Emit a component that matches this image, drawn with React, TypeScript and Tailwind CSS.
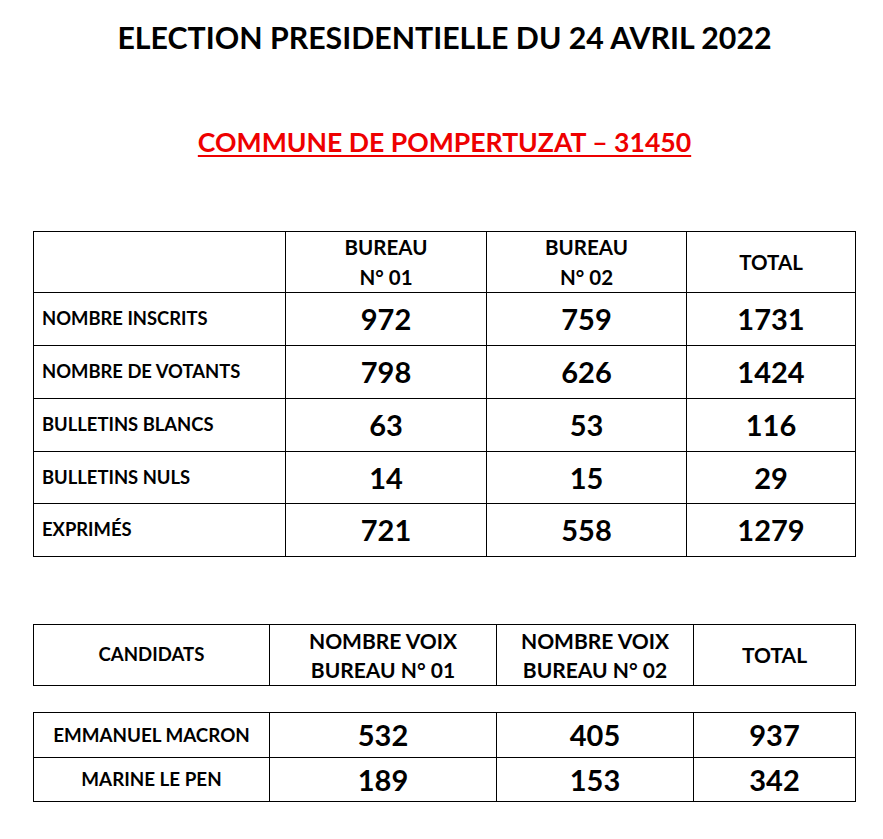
import React from 'react';

const stats = [
  { label: 'NOMBRE INSCRITS', b1: '972', b2: '759', total: '1731' },
  { label: 'NOMBRE DE VOTANTS', b1: '798', b2: '626', total: '1424' },
  { label: 'BULLETINS BLANCS', b1: '63', b2: '53', total: '116' },
  { label: 'BULLETINS NULS', b1: '14', b2: '15', total: '29' },
  { label: 'EXPRIMÉS', b1: '721', b2: '558', total: '1279' },
];

const candidats = [
  { name: 'EMMANUEL MACRON', b1: '532', b2: '405', total: '937' },
  { name: 'MARINE LE PEN', b1: '189', b2: '153', total: '342' },
];

const cell = 'border border-black p-0';

const App: React.FC = () => {
  return (
    <div className="w-[883px] h-[839px] bg-white text-black font-['Lato',sans-serif] font-bold flex flex-col items-center overflow-hidden">
      {/* Titles */}
      <h1 className="mt-[19px] ml-[6px] text-[30.3px] leading-[36px] font-bold">ELECTION PRESIDENTIELLE DU 24 AVRIL 2022</h1>
      <h2 className="mt-[71px] ml-[6px] text-[26.6px] leading-[32px] font-bold text-[#ee0000] underline decoration-2 underline-offset-[3px]">
        COMMUNE DE POMPERTUZAT – 31450
      </h2>

      {/* Résultats par bureau */}
      <table className="self-start mt-[73px] ml-[33px] border-collapse">
        <colgroup>
          <col className="w-[252px]" />
          <col className="w-[201px]" />
          <col className="w-[200px]" />
          <col className="w-[169px]" />
        </colgroup>
        <thead>
          <tr className="h-[59px]">
            <th className={cell}></th>
            <th className={`${cell} text-[20.5px] leading-[30px] font-bold`}>
              BUREAU
              <br />
              N° 01
            </th>
            <th className={`${cell} text-[20.5px] leading-[30px] font-bold`}>
              BUREAU
              <br />
              N° 02
            </th>
            <th className={`${cell} text-[20.5px] leading-[30px] font-bold`}>TOTAL</th>
          </tr>
        </thead>
        <tbody>
          {stats.map((row, i) => (
            <tr key={row.label} className={i === 3 ? 'h-[52px]' : 'h-[53px]'}>
              <td className={`${cell} pl-[8px] text-[18.4px] text-left`}>{row.label}</td>
              <td className={`${cell} text-[29px] text-center`}>{row.b1}</td>
              <td className={`${cell} text-[29px] text-center`}>{row.b2}</td>
              <td className={`${cell} text-[29px] text-center`}>{row.total}</td>
            </tr>
          ))}
        </tbody>
      </table>

      {/* Candidats */}
      <table className="self-start mt-[67px] ml-[33px] border-collapse">
        <colgroup>
          <col className="w-[236px]" />
          <col className="w-[227px]" />
          <col className="w-[197px]" />
          <col className="w-[162px]" />
        </colgroup>
        <thead>
          <tr className="h-[61px]">
            <th className={`${cell} text-[18.6px] font-bold`}>CANDIDATS</th>
            <th className={`${cell} text-[21px] leading-[29px] font-bold`}>
              NOMBRE VOIX
              <br />
              BUREAU N° 01
            </th>
            <th className={`${cell} text-[21px] leading-[29px] font-bold`}>
              NOMBRE VOIX
              <br />
              BUREAU N° 02
            </th>
            <th className={`${cell} text-[21px] font-bold`}>TOTAL</th>
          </tr>
        </thead>
      </table>

      <table className="self-start mt-[26px] ml-[33px] border-collapse">
        <colgroup>
          <col className="w-[236px]" />
          <col className="w-[227px]" />
          <col className="w-[197px]" />
          <col className="w-[162px]" />
        </colgroup>
        <tbody>
          {candidats.map((c) => (
            <tr key={c.name} className="h-[43px]">
              <td className={`${cell} text-[18.8px] text-center`}>{c.name}</td>
              <td className={`${cell} text-[29px] text-center`}>{c.b1}</td>
              <td className={`${cell} text-[29px] text-center`}>{c.b2}</td>
              <td className={`${cell} text-[29px] text-center`}>{c.total}</td>
            </tr>
          ))}
        </tbody>
      </table>
    </div>
  );
};

export default App;
